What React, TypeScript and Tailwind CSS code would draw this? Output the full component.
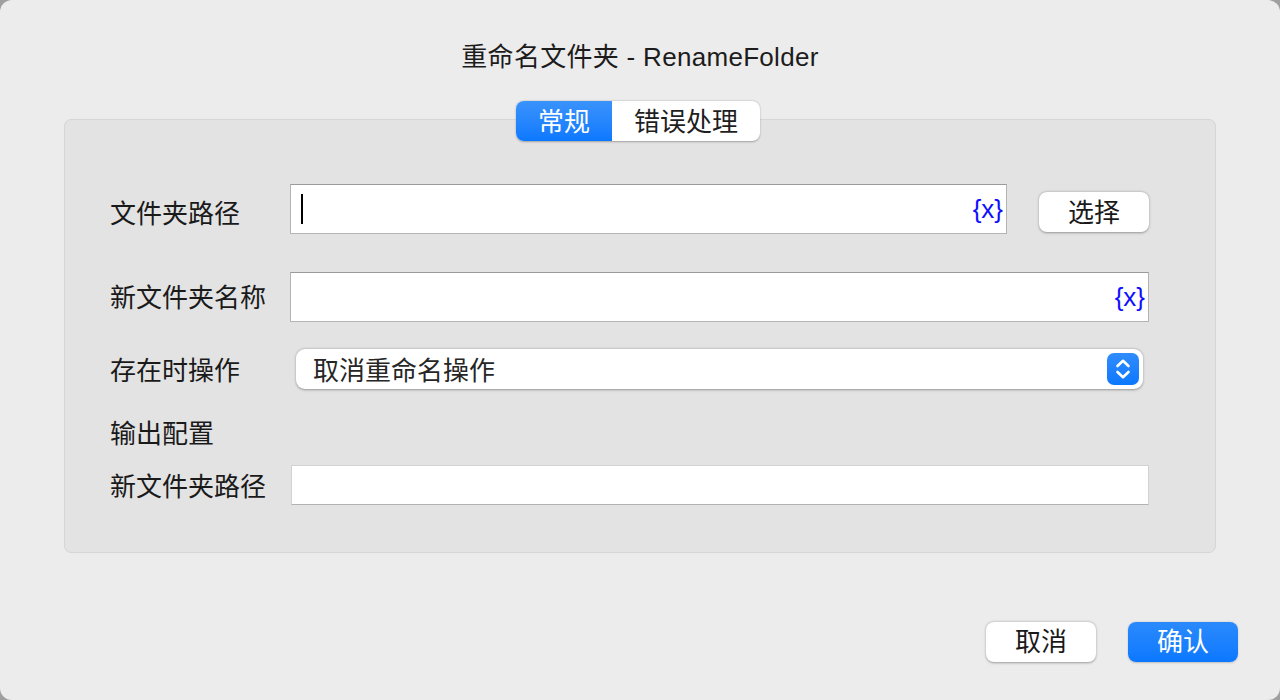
import React from "react";

const FONT = "font-['Liberation_Sans','Noto_Sans_CJK_SC',sans-serif]";

// Blue "{x}" variable marker shown inside text fields
function VarTag() {
  return <span className="text-[26px] leading-none text-[#0f0fff] pr-[3px]">{"{x}"}</span>;
}

function Stepper() {
  return (
    <span className="flex h-[32px] w-[32px] items-center justify-center rounded-[7px] bg-gradient-to-b from-[#2f8cfc] to-[#0a78ff]">
      <svg width="18" height="24" viewBox="0 0 18 24" fill="none">
        <path d="M3.5 9 L9 3.8 L14.5 9" stroke="white" strokeWidth="2.6" strokeLinecap="round" strokeLinejoin="round" />
        <path d="M3.5 15 L9 20.2 L14.5 15" stroke="white" strokeWidth="2.6" strokeLinecap="round" strokeLinejoin="round" />
      </svg>
    </span>
  );
}

export default function App() {
  return (
    <div className={`w-[1280px] h-[700px] bg-[#9f9f9f] ${FONT}`}>
      <div className="flex h-full w-full flex-col rounded-[12px] bg-[#ececec]">
        {/* Title */}
        <div className="pt-[42px] text-center text-[26px] leading-[30px] tracking-[0.3px] text-[#1c1c1c]">
          重命名文件夹 - RenameFolder
        </div>

        {/* Tabs + group box */}
        <div className="mt-[29px] flex flex-col items-center px-[64px]">
          <div className="relative z-10 mr-[4px] flex h-[40px] overflow-hidden rounded-[8px] bg-white shadow-[0_0.5px_2px_rgba(0,0,0,0.3)]">
            <div className="flex w-[96px] items-center justify-center bg-gradient-to-b from-[#3a93fb] to-[#0a78ff] pt-[1px] text-[26px] leading-none text-white">
              常规
            </div>
            <div className="flex w-[148px] items-center justify-center pt-[1px] text-[26px] leading-none text-[#1e1e1e]">
              错误处理
            </div>
          </div>

          <div className="-mt-[22px] w-full rounded-[7px] border border-[#d6d6d6] bg-[#e3e3e3] pb-[47px] pl-[45px] pr-[66px] pt-[64px]">
            {/* 文件夹路径 */}
            <div className="flex h-[50px] items-center">
              <div className="w-[180px] pt-[10px] text-[26px] leading-none text-[#1a1a1a]">文件夹路径</div>
              <div className="flex h-[50px] flex-1 items-center border border-[#b4b4b4] border-t-[#9a9a9a] bg-white pl-[10px]">
                <span className="h-[30px] w-[2px] bg-black" />
                <span className="flex-1" />
                <VarTag />
              </div>
              <button className="ml-[32px] mt-[6px] flex h-[40px] w-[110px] items-center justify-center rounded-[8px] bg-white pt-[2px] text-[26px] leading-none text-[#1a1a1a] shadow-[0_0.5px_2.5px_rgba(0,0,0,0.35)]">
                选择
              </button>
            </div>

            {/* 新文件夹名称 */}
            <div className="mt-[38px] flex h-[50px] items-center">
              <div className="w-[180px] pt-[2px] text-[26px] leading-none text-[#1a1a1a]">新文件夹名称</div>
              <div className="flex h-[50px] flex-1 items-center justify-end border border-[#b4b4b4] border-t-[#9a9a9a] bg-white">
                <VarTag />
              </div>
            </div>

            {/* 存在时操作 */}
            <div className="mt-[27px] flex h-[40px] items-center">
              <div className="w-[186px] pt-[3px] text-[26px] leading-none text-[#1a1a1a]">存在时操作</div>
              <div className="mr-[6px] flex h-[40px] flex-1 items-center justify-between rounded-[9px] bg-white pl-[17px] pr-[4px] shadow-[0_0.5px_2.5px_rgba(0,0,0,0.35)]">
                <span className="pt-[3px] text-[26px] leading-none text-[#262626]">取消重命名操作</span>
                <Stepper />
              </div>
            </div>

            {/* 输出配置 */}
            <div className="mt-[29px] flex h-[30px] items-center pt-[2px] text-[26px] leading-none text-[#1a1a1a]">
              输出配置
            </div>

            {/* 新文件夹路径 */}
            <div className="mt-[17px] flex h-[40px] items-center">
              <div className="w-[181px] pt-[3px] text-[26px] leading-none text-[#1a1a1a]">新文件夹路径</div>
              <div className="h-[40px] flex-1 border border-[#d2d2d2] border-b-[#b2b2b2] bg-white" />
            </div>
          </div>
        </div>

        {/* Footer buttons */}
        <div className="mt-[69px] flex justify-end gap-[32px] pr-[42px]">
          <button className="flex h-[40px] w-[110px] items-center justify-center rounded-[8px] bg-white text-[26px] leading-none text-[#1a1a1a] shadow-[0_0.5px_2.5px_rgba(0,0,0,0.35)]">
            取消
          </button>
          <button className="flex h-[40px] w-[110px] items-center justify-center rounded-[8px] bg-gradient-to-b from-[#2a8afc] to-[#0a78ff] text-[26px] leading-none text-white shadow-[0_0.5px_2px_rgba(0,0,0,0.2)]">
            确认
          </button>
        </div>
      </div>
    </div>
  );
}
